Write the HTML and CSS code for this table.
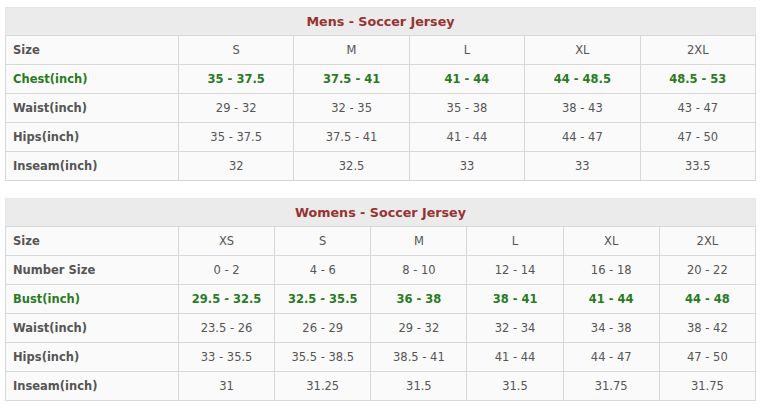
FILE: index.html
```html
<!DOCTYPE html>
<html>
<head>
<meta charset="utf-8">
<link rel="stylesheet" href="styles.css">
</head>
<body>
<table class="chart mens">
  <colgroup><col class="first"><col><col><col><col><col></colgroup>
  <tr class="title"><th colspan="6">Mens - Soccer Jersey</th></tr>
  <tr class="grey"><td class="label">Size</td><td>S</td><td>M</td><td>L</td><td>XL</td><td>2XL</td></tr>
  <tr class="green"><td class="label">Chest(inch)</td><td>35 - 37.5</td><td>37.5 - 41</td><td>41 - 44</td><td>44 - 48.5</td><td>48.5 - 53</td></tr>
  <tr class="grey"><td class="label">Waist(inch)</td><td>29 - 32</td><td>32 - 35</td><td>35 - 38</td><td>38 - 43</td><td>43 - 47</td></tr>
  <tr class="grey"><td class="label">Hips(inch)</td><td>35 - 37.5</td><td>37.5 - 41</td><td>41 - 44</td><td>44 - 47</td><td>47 - 50</td></tr>
  <tr class="grey"><td class="label">Inseam(inch)</td><td>32</td><td>32.5</td><td>33</td><td>33</td><td>33.5</td></tr>
</table>
<table class="chart womens">
  <colgroup><col class="first"><col><col><col><col><col><col></colgroup>
  <tr class="title"><th colspan="7">Womens - Soccer Jersey</th></tr>
  <tr class="grey"><td class="label">Size</td><td>XS</td><td>S</td><td>M</td><td>L</td><td>XL</td><td>2XL</td></tr>
  <tr class="grey"><td class="label">Number Size</td><td>0 - 2</td><td>4 - 6</td><td>8 - 10</td><td>12 - 14</td><td>16 - 18</td><td>20 - 22</td></tr>
  <tr class="green"><td class="label">Bust(inch)</td><td>29.5 - 32.5</td><td>32.5 - 35.5</td><td>36 - 38</td><td>38 - 41</td><td>41 - 44</td><td>44 - 48</td></tr>
  <tr class="grey"><td class="label">Waist(inch)</td><td>23.5 - 26</td><td>26 - 29</td><td>29 - 32</td><td>32 - 34</td><td>34 - 38</td><td>38 - 42</td></tr>
  <tr class="grey"><td class="label">Hips(inch)</td><td>33 - 35.5</td><td>35.5 - 38.5</td><td>38.5 - 41</td><td>41 - 44</td><td>44 - 47</td><td>47 - 50</td></tr>
  <tr class="grey"><td class="label">Inseam(inch)</td><td>31</td><td>31.25</td><td>31.5</td><td>31.5</td><td>31.75</td><td>31.75</td></tr>
</table>
</body>
</html>
```
FILE: styles.css
```css
body {
  margin: 7px 0 0 5px;
  background: #ffffff;
  font-family: "DejaVu Sans", Verdana, sans-serif;
}
.chart {
  border-collapse: collapse;
  width: 751px;
  table-layout: fixed;
  font-size: 11.5px;
}
.chart col.first { width: 173px; }
.mens { margin-bottom: 17px; }
.chart th {
  background: #ebebeb;
  color: #973232;
  font-size: 12.7px;
  font-weight: bold;
  height: 27px;
  padding: 0;
  border: 1px solid #e6e6e6;
  border-bottom-color: #d8d8d8;
}
.chart td {
  height: 28px;
  padding: 0;
  border: 1px solid #d8d8d8;
  background: #fafafa;
  text-align: center;
  color: #555555;
}
.chart td.label {
  text-align: left;
  padding-left: 7px;
  font-weight: bold;
  color: #555555;
}
.chart tr.green td {
  color: #2a7a1f;
  font-weight: bold;
}
```
